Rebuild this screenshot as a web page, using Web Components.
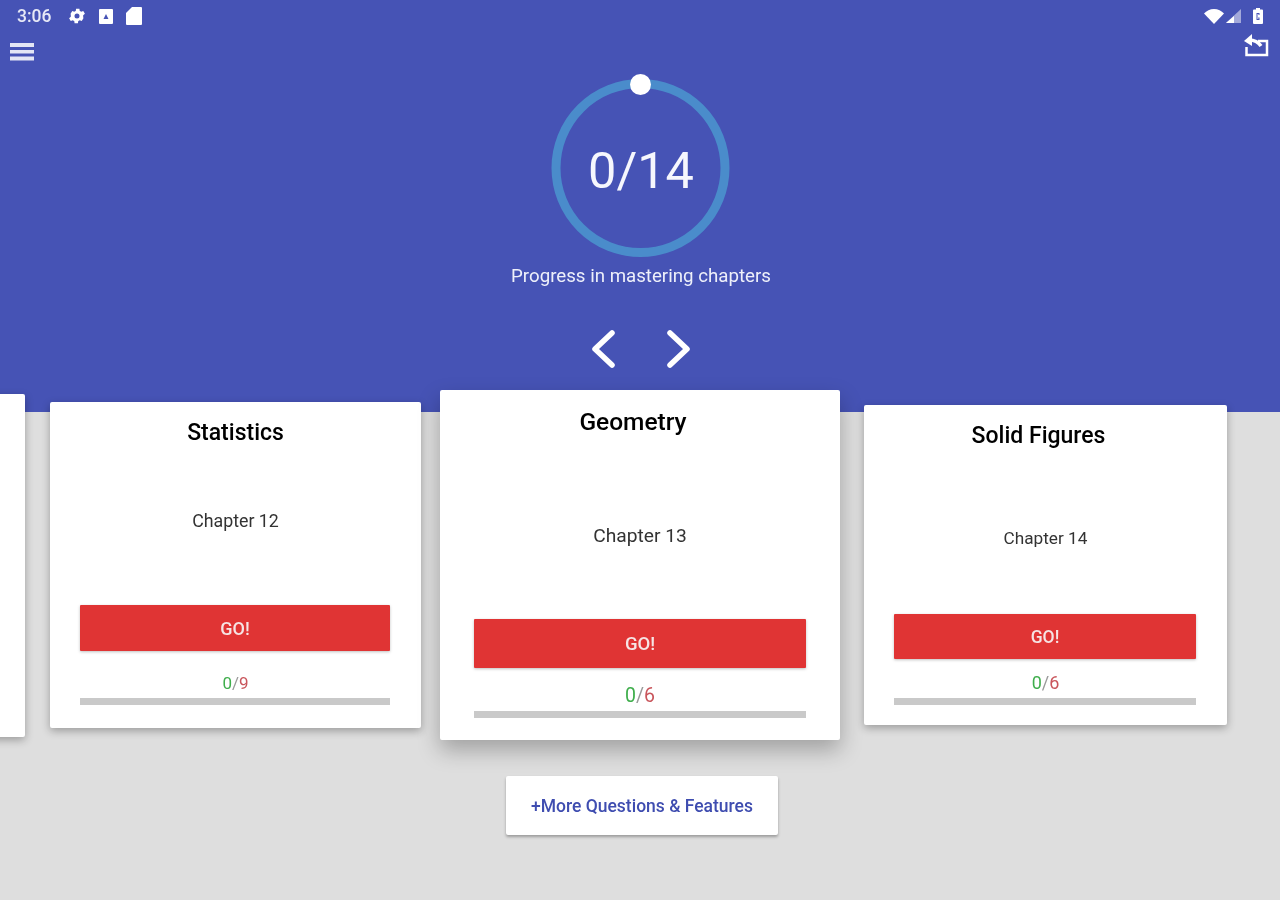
<!DOCTYPE html>
<html lang="en">
<head>
<meta charset="utf-8">
<title>Chapters</title>
<style>
  html, body { margin: 0; height: 100%; background: #dedede; font-family: Roboto, "Liberation Sans", sans-serif; }
  body { overflow: hidden; }
</style>
</head>
<body>
<math-app></math-app>

<script>
/**
 * Top row with the clock and the system icons.
 */
customElements.define('status-bar',
  class StatusBar extends HTMLElement {
    constructor () {
      super()
      this.attachShadow({ mode: 'open' }).innerHTML = `
        <style>
          :host { display: flex; align-items: center; height: 32px; padding: 0 17px 0 17px; color: #fff; }
          .time { font-size: 17.5px; font-weight: 500; width: 50px; color: #e6e8f6; }
          .left { display: flex; align-items: center; gap: 12px; }
          .right { display: flex; align-items: center; gap: 2px; margin-left: auto; }
          svg { display: block; fill: #fff; }
        </style>
        <span class="time">3:06</span>
        <div class="left">
          <svg width="20" height="20" viewBox="0 0 24 24"><path fill-rule="evenodd" d="M19.4 13a7.500 7.500 0 0 0 0-2l2.100-1.600-2-3.500-2.500 1a7.500 7.500 0 0 0-1.700-1l-.4-2.600h-4l-.4 2.600a7.500 7.500 0 0 0-1.700 1l-2.500-1-2 3.500L4.600 11a7.500 7.500 0 0 0 0 2l-2.100 1.600 2 3.500 2.500-1a7.500 7.500 0 0 0 1.700 1l.4 2.600h4l.4-2.600a7.500 7.500 0 0 0 1.700-1l2.500 1 2-3.500zM12 15a3 3 0 1 1 0-6 3 3 0 0 1 0 6z"/></svg>
          <svg width="14" height="15" viewBox="0 0 14 15"><path fill-rule="evenodd" d="M1 0h12a1 1 0 0 1 1 1v13a1 1 0 0 1-1 1H1a1 1 0 0 1-1-1V1a1 1 0 0 1 1-1zm6 5L4.500 10h5z"/></svg>
          <svg style="margin-left:1px" width="16" height="18" viewBox="0 0 16 18"><path d="M6 0h9a1 1 0 0 1 1 1v16a1 1 0 0 1-1 1H1a1 1 0 0 1-1-1V6z"/></svg>
        </div>
        <div class="right">
          <svg width="20" height="15" viewBox="0 0 20 15"><path d="M0 4.500C2.500 1.800 6 0 10 0s7.500 1.800 10 4.500L10 15z"/></svg>
          <svg width="15" height="14" viewBox="0 0 15 14"><path fill="#fff" fill-opacity=".5" d="M15 0v14H0z"/><path d="M8 7v7H0z"/></svg>
          <svg style="margin-left:10px" width="10" height="16" viewBox="0 0 10 16"><path fill-rule="evenodd" d="M3 0h4v1.500h2a1 1 0 0 1 1 1V15a1 1 0 0 1-1 1H1a1 1 0 0 1-1-1V2.500a1 1 0 0 1 1-1h2zM3.500 5v7h3V9.500H5.200v1H5.500v.5h-1V6h1v1h1V5z"/></svg>
        </div>
      `
    }
  }
)

/**
 * Menu button on the left and the restore button on the right.
 */
customElements.define('tool-bar',
  class ToolBar extends HTMLElement {
    constructor () {
      super()
      this.attachShadow({ mode: 'open' }).innerHTML = `
        <style>
          :host { display: flex; justify-content: space-between; align-items: flex-start; height: 28px; padding: 0 11px 0 10px; }
          svg { display: block; }
          .menu { margin-top: 10px; }
          .back { margin-top: 1px; }
        </style>
        <svg class="menu" width="24" height="19" viewBox="0 0 24 19" fill="#e3e6f5">
          <rect y="1" width="24" height="4"/><rect y="8" width="24" height="3.500"/><rect y="14.500" width="24" height="4"/>
        </svg>
        <svg class="back" width="26" height="24" viewBox="0 0 26 24" fill="none" stroke="#fff" stroke-width="2.500">
          <path d="M15 8h9v14H3.500v-8"/>
          <path d="M6 7c5 0 9 1.500 12 6" stroke-width="3.500"/>
          <path d="M9 1 1 8l8 5z" fill="#fff" stroke="none"/>
        </svg>
      `
    }
  }
)

/**
 * Round progress meter with a count in its centre.
 */
customElements.define('progress-ring',
  class ProgressRing extends HTMLElement {
    constructor () {
      super()
      this.attachShadow({ mode: 'open' }).innerHTML = `
        <style>
          :host { display: grid; place-items: center; width: 200px; height: 196px; }
          svg, .count { grid-area: 1 / 1; }
          svg { display: block; overflow: visible; }
          .count { font-size: 50.500px; font-weight: 400; color: #f6f7fd; padding-top: 24px; }
        </style>
        <svg width="200" height="196" viewBox="0 0 200 196">
          <circle cx="99.500" cy="108" r="84.500" fill="none" stroke="#4a8ccb" stroke-width="9"/>
          <circle cx="99.500" cy="24.500" r="10.500" fill="#fff"/>
        </svg>
        <span class="count"><slot></slot></span>
      `
    }
  }
)

/**
 * Back and forward arrows of the carousel.
 */
customElements.define('pager-arrows',
  class PagerArrows extends HTMLElement {
    constructor () {
      super()
      this.attachShadow({ mode: 'open' }).innerHTML = `
        <style>
          :host { display: flex; justify-content: center; gap: 50px; }
          svg { display: block; fill: none; stroke: #fff; stroke-width: 5.5; stroke-linecap: round; stroke-linejoin: round; }
        </style>
        <svg width="25" height="40" viewBox="0 0 25 40"><path d="M21 4 4 20l17 16"/></svg>
        <svg width="25" height="40" viewBox="0 0 25 40"><path d="M4 4l17 16L4 36"/></svg>
      `
    }
  }
)

/**
 * One chapter in the carousel. Sizes differ from card to card and
 * come in as custom properties from the parent.
 */
customElements.define('chapter-card',
  class ChapterCard extends HTMLElement {
    constructor () {
      super()
      this.attachShadow({ mode: 'open' }).innerHTML = `
        <style>
          :host {
            display: flex; flex-direction: column; flex: none; box-sizing: border-box;
            background: #fff; border-radius: 2px; text-align: center;
            box-shadow: 0 3px 8px rgba(0, 0, 0, .3);
          }
          :host([front]) { box-shadow: 0 10px 22px rgba(0, 0, 0, .28); }
          .title {
            font-weight: 500; color: #000; font-size: var(--title-size);
            margin-top: var(--title-top); line-height: 30px; padding-right: var(--title-pad, 0);
          }
          .chapter {
            font-size: var(--chapter-size); color: #333; flex: 1; display: flex;
            align-items: center; justify-content: center;
            padding: var(--chapter-top, 0) 0 var(--chapter-bottom, 0) 0;
          }
          .go {
            background: #e03434; color: #f6e4e4; font-weight: 500; border-radius: 1px;
            font-size: var(--go-size); height: var(--go-h); margin: 0 var(--go-mr) 0 var(--go-ml);
            display: flex; align-items: center; justify-content: center;
            box-shadow: 0 1px 3px rgba(0, 0, 0, .25);
          }
          .score {
            font-size: var(--score-size); height: var(--score-h); display: flex;
            align-items: flex-end; justify-content: center; padding-bottom: 5px; box-sizing: border-box;
            line-height: 20px; color: #c9565c;
          }
          .score b { font-weight: 400; color: #3fae4c; }
          .score i { font-style: normal; color: #999; }
          .bar { height: 7px; background: #c9c9c9; margin: 0 var(--go-mr) var(--bar-mb) var(--go-ml); }
        </style>
        <div class="title"></div>
        <div class="chapter"></div>
        <div class="go">GO!</div>
        <div class="score"><b>0</b><i>/</i><span class="total"></span></div>
        <div class="bar"></div>
      `
    }

    connectedCallback () {
      const root = this.shadowRoot
      // The card at the screen edge only shows its white side.
      if (this.hasAttribute('blank')) {
        root.querySelectorAll('div').forEach(el => el.remove())
        return
      }
      root.querySelector('.title').textContent = this.getAttribute('title-text')
      root.querySelector('.chapter').textContent = this.getAttribute('chapter')
      root.querySelector('.total').textContent = this.getAttribute('total')
    }
  }
)

/**
 * White button under the carousel.
 */
customElements.define('more-button',
  class MoreButton extends HTMLElement {
    constructor () {
      super()
      this.attachShadow({ mode: 'open' }).innerHTML = `
        <style>
          :host {
            display: flex; align-items: center; justify-content: center;
            width: 272px; height: 59px; background: #fff; border-radius: 2px;
            font-size: 17.500px; font-weight: 500; color: #3f4db0;
            box-shadow: 0 2px 3px rgba(0, 0, 0, .3);
          }
        </style>
        <slot></slot>
      `
    }
  }
)

/**
 * The whole screen: blue header and the cards that overlap its lower edge.
 * The reference is an enlarged, soft picture, hence the small blur.
 */
customElements.define('math-app',
  class MathApp extends HTMLElement {
    constructor () {
      super()
      this.attachShadow({ mode: 'open' }).innerHTML = `
        <style>
          :host { display: block; width: 1280px; height: 900px; overflow: hidden; background: #dedede; color: #fff; filter: blur(.6px); }
          header { background: #4653b5; height: 412px; display: flex; flex-direction: column; }
          .center { display: flex; flex-direction: column; align-items: center; }
          progress-ring { margin-left: 2px; }
          .label { font-size: 18.700px; line-height: 24px; color: #eef0fa; margin-left: 2px; margin-top: 8px; }
          pager-arrows { margin-top: 41px; margin-left: 1px; }
          .cards { display: flex; align-items: center; height: 350px; margin-top: -22px; }
          chapter-card { --title-top: 16px; --go-ml: 30px; --go-mr: 31px; --title-size: 23px; --chapter-size: 17.800px; --go-size: 18px; --score-size: 17px; }
          .edge { width: 380px; height: 343px; margin-left: -355px; }
          .c12 { width: 371px; height: 326px; margin-left: 25px; --chapter-bottom: 12px; --go-h: 46px; --score-h: 47px; --bar-mb: 23px; }
          .c13 { width: 400px; height: 350px; margin-left: 19px; --title-top: 17px; --title-pad: 14px; --title-size: 24.500px; --chapter-size: 19.200px; --chapter-top: 14px; --go-ml: 34px; --go-mr: 34px; --go-h: 49px; --score-h: 43px; --bar-mb: 22px; --go-size: 18.500px; --score-size: 19.500px; }
          .c14 { width: 363px; height: 320px; margin-left: 24px; --title-pad: 14px; --chapter-size: 17.200px; --chapter-top: 10px; --go-h: 45px; --score-h: 39px; --bar-mb: 20px; --score-size: 18px; --go-size: 17.500px; }
          .more { display: flex; justify-content: center; margin-top: 36px; margin-left: 4px; }
        </style>
        <header>
          <status-bar></status-bar>
          <tool-bar></tool-bar>
          <div class="center">
            <progress-ring>0/14</progress-ring>
            <div class="label">Progress in mastering chapters</div>
            <pager-arrows></pager-arrows>
          </div>
        </header>
        <div class="cards">
          <chapter-card class="edge" blank></chapter-card>
          <chapter-card class="c12" title-text="Statistics" chapter="Chapter 12" total="9"></chapter-card>
          <chapter-card class="c13" front title-text="Geometry" chapter="Chapter 13" total="6"></chapter-card>
          <chapter-card class="c14" title-text="Solid Figures" chapter="Chapter 14" total="6"></chapter-card>
        </div>
        <div class="more"><more-button>+More Questions &amp; Features</more-button></div>
      `
    }
  }
)
</script>
</body>
</html>
